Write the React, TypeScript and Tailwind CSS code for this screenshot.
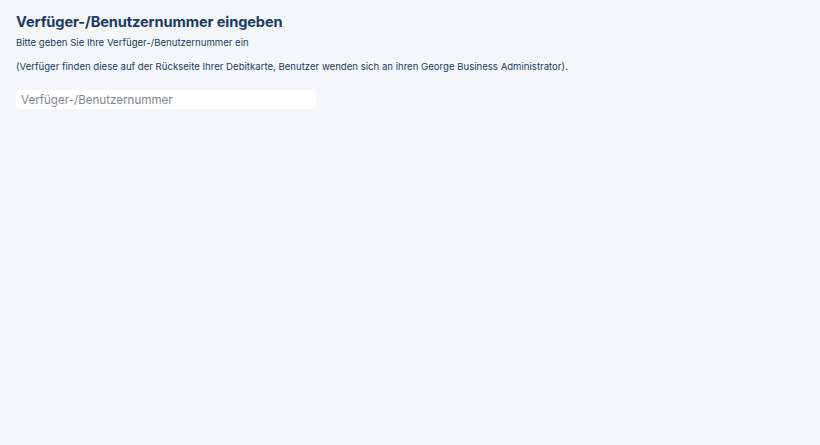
const App = () => {
    return (
        <div className="min-h-[445px] bg-[#f4f6fa] px-4 pt-[12px] font-['Inter',sans-serif] text-[#1b3a61]">
            <h1 className="text-[14.6px] font-bold leading-5 tracking-[-0.1px]">
                Verfüger-/Benutzernummer eingeben
            </h1>
            <p className="mt-[3px] text-[9.6px] leading-4">
                Bitte geben Sie Ihre Verfüger-/Benutzernummer ein
            </p>
            <p className="mt-2 text-[9.6px] leading-4">
                (Verfüger finden diese auf der Rückseite Ihrer Debitkarte, Benutzer wenden sich an ihren George Business Administrator).
            </p>
            <input
                type="text"
                placeholder="Verfüger-/Benutzernummer"
                className="mt-[15px] block h-[19px] w-[300px] rounded-[4px] bg-white px-[5px] text-[11.6px] text-[#333] placeholder:text-[#85888d] outline-none"
            />
        </div>
    );
};

export default App;
